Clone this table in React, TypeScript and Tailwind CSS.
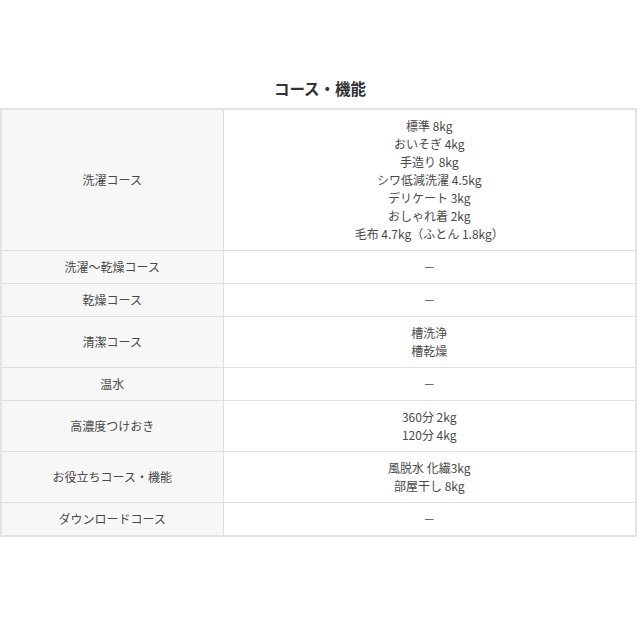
import React from "react";

const rows: { label: string; values: string[] }[] = [
  {
    label: "洗濯コース",
    values: [
      "標準 8kg",
      "おいそぎ 4kg",
      "手造り 8kg",
      "シワ低減洗濯 4.5kg",
      "デリケート 3kg",
      "おしゃれ着 2kg",
      "毛布 4.7kg（ふとん 1.8kg）",
    ],
  },
  { label: "洗濯～乾燥コース", values: ["－"] },
  { label: "乾燥コース", values: ["－"] },
  { label: "清潔コース", values: ["槽洗浄", "槽乾燥"] },
  { label: "温水", values: ["－"] },
  { label: "高濃度つけおき", values: ["360分 2kg", "120分 4kg"] },
  { label: "お役立ちコース・機能", values: ["風脱水 化繊3kg", "部屋干し 8kg"] },
  { label: "ダウンロードコース", values: ["－"] },
];

export default function App() {
  return (
    <div
      className="w-[640px] h-[640px] bg-white text-[#4a4a4a]"
      style={{ fontFamily: '"Noto Sans CJK JP", "Noto Sans", sans-serif' }}
    >
      <div className="pt-[77px]">
        <h2 className="text-center text-[15.5px] font-bold text-[#333] leading-[22px] mb-[9px]">コース・機能</h2>
        <table className="w-[637px] border-collapse border-2 border-[#e3e3e3] text-[12px] leading-[18px]">
          <tbody>
            {rows.map((r) => (
              <tr key={r.label}>
                <th className="w-[222px] bg-[#f7f7f7] border border-[#dedede] font-normal text-center py-[7px]">
                  {r.label}
                </th>
                <td className="border border-[#dedede] text-center py-[7px]">
                  {r.values.map((v) => (
                    <div key={v}>{v}</div>
                  ))}
                </td>
              </tr>
            ))}
          </tbody>
        </table>
      </div>
    </div>
  );
}
